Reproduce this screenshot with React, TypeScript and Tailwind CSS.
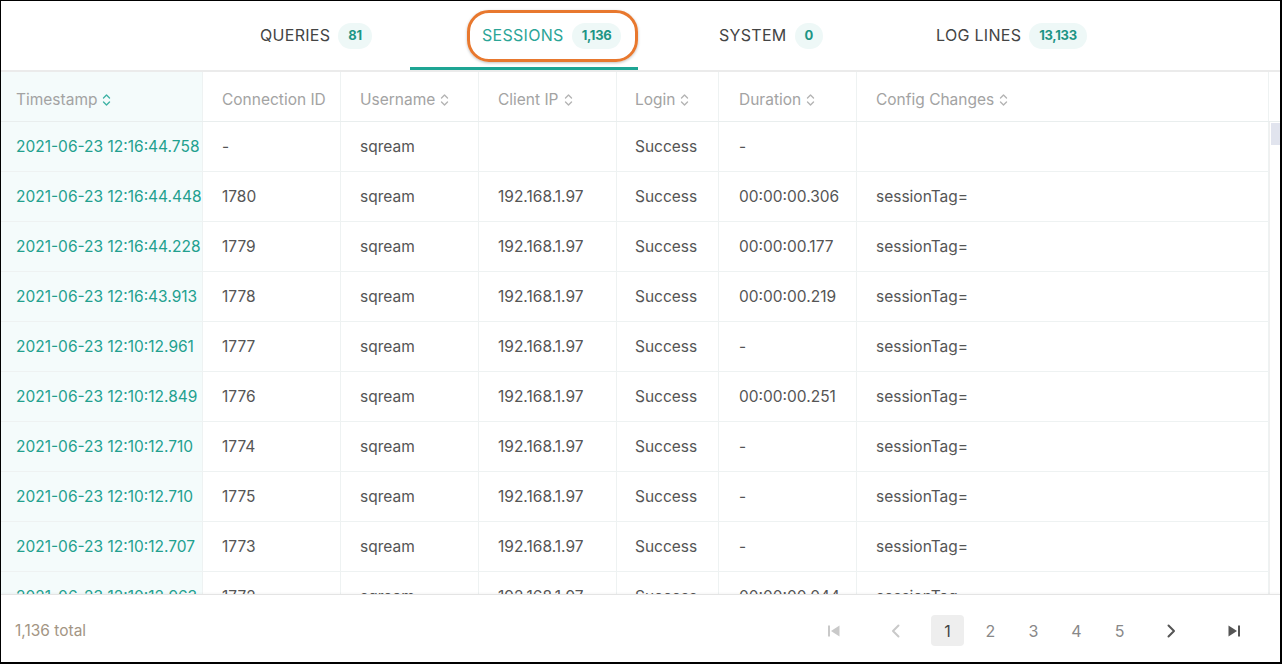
import React from "react";

type Row = {
  ts: string;
  conn: string;
  user: string;
  ip: string;
  login: string;
  duration: string;
  config: string;
};

const rows: Row[] = [
  { ts: "2021-06-23 12:16:44.758", conn: "-", user: "sqream", ip: "", login: "Success", duration: "-", config: "" },
  { ts: "2021-06-23 12:16:44.448", conn: "1780", user: "sqream", ip: "192.168.1.97", login: "Success", duration: "00:00:00.306", config: "sessionTag=" },
  { ts: "2021-06-23 12:16:44.228", conn: "1779", user: "sqream", ip: "192.168.1.97", login: "Success", duration: "00:00:00.177", config: "sessionTag=" },
  { ts: "2021-06-23 12:16:43.913", conn: "1778", user: "sqream", ip: "192.168.1.97", login: "Success", duration: "00:00:00.219", config: "sessionTag=" },
  { ts: "2021-06-23 12:10:12.961", conn: "1777", user: "sqream", ip: "192.168.1.97", login: "Success", duration: "-", config: "sessionTag=" },
  { ts: "2021-06-23 12:10:12.849", conn: "1776", user: "sqream", ip: "192.168.1.97", login: "Success", duration: "00:00:00.251", config: "sessionTag=" },
  { ts: "2021-06-23 12:10:12.710", conn: "1774", user: "sqream", ip: "192.168.1.97", login: "Success", duration: "-", config: "sessionTag=" },
  { ts: "2021-06-23 12:10:12.710", conn: "1775", user: "sqream", ip: "192.168.1.97", login: "Success", duration: "-", config: "sessionTag=" },
  { ts: "2021-06-23 12:10:12.707", conn: "1773", user: "sqream", ip: "192.168.1.97", login: "Success", duration: "-", config: "sessionTag=" },
  { ts: "2021-06-23 12:10:12.963", conn: "1772", user: "sqream", ip: "192.168.1.97", login: "Success", duration: "00:00:00.044", config: "sessionTag=" },
];

function SortIcon({ active }: { active?: boolean }) {
  return (
    <svg width="9" height="14" viewBox="0 0 9 14" className="ml-[5px] shrink-0">
      <path
        d="M1.5 5 L4.5 2 L7.5 5 M1.5 9 L4.5 12 L7.5 9"
        fill="none"
        stroke={active ? "#3fb3a5" : "#b4b4b4"}
        strokeWidth="1.4"
        strokeLinecap="round"
        strokeLinejoin="round"
      />
    </svg>
  );
}

function Tab({
  label,
  count,
  active,
  pad,
}: {
  label: string;
  count: string;
  active?: boolean;
  pad: string;
}) {
  return (
    <div className={`relative flex h-full w-[228px] items-center pb-[2px] ${pad}`}>
      {active && (
        <div className="absolute left-[57px] top-[9px] h-[52px] w-[171px] rounded-[22px] border-[3px] border-[#e8782e] shadow-[0_1px_3px_rgba(0,0,0,0.25)]" />
      )}
      <span
        className={`text-[16px] tracking-[0.3px] ${active ? "text-[#2ba597]" : "text-[#444]"}`}
      >
        {label}
      </span>
      <span className="ml-[8px] mt-[2px] flex h-[26px] items-center rounded-full bg-[#eef8f7] px-[10px] text-[13px] font-bold tracking-[-0.3px] text-[#1d9585]">
        {count}
      </span>
      {active && <div className="absolute bottom-0 left-0 h-[3px] w-full bg-[#1ea594]" />}
    </div>
  );
}

function EdgeIcon({ dir, color }: { dir: "first" | "last"; color: string }) {
  return (
    <svg width="16" height="16" viewBox="0 0 16 16">
      {dir === "first" ? (
        <>
          <rect x="2" y="2.5" width="2" height="11" fill={color} />
          <path d="M13.5 2.5 L5 8 L13.5 13.5 Z" fill={color} />
        </>
      ) : (
        <>
          <path d="M2.5 2.5 L11 8 L2.5 13.5 Z" fill={color} />
          <rect x="12" y="2.5" width="2" height="11" fill={color} />
        </>
      )}
    </svg>
  );
}

function Chevron({ dir, color }: { dir: "left" | "right"; color: string }) {
  return (
    <svg width="14" height="16" viewBox="0 0 14 16">
      <path
        d={dir === "left" ? "M9.5 2.5 L4 8 L9.5 13.5" : "M4.5 2.5 L10 8 L4.5 13.5"}
        fill="none"
        stroke={color}
        strokeWidth="2"
        strokeLinecap="round"
        strokeLinejoin="round"
      />
    </svg>
  );
}

const cellBase = "flex h-full shrink-0 items-center border-r border-[#eef2f2] overflow-hidden whitespace-nowrap";

export default function App() {
  return (
    <div className="box-border flex h-[664px] w-[1282px] flex-col overflow-hidden border-l border-t border-r-2 border-b-2 border-black bg-white font-['Inter','Noto_Sans',sans-serif]">
      {/* tabs */}
      <div className="flex h-[71px] shrink-0 border-b-2 border-[#ebebeb] pl-[181px]">
        <Tab label="QUERIES" count="81" pad="pl-[78px]" />
        <Tab label="SESSIONS" count="1,136" active pad="pl-[72px]" />
        <Tab label="SYSTEM" count="0" pad="pl-[81px]" />
        <Tab label="LOG LINES" count="13,133" pad="pl-[70px]" />
      </div>

      {/* table */}
      <div className="flex min-h-0 flex-1 flex-col overflow-hidden">
        <div className="flex h-[50px] shrink-0 border-b border-[#e9eeee] text-[15.5px] text-[#a3a3a3]">
          <div className={`${cellBase} w-[202px] bg-[#f4fbfb] pl-[15px] pt-[7px]`}>
            Timestamp
            <SortIcon active />
          </div>
          <div className={`${cellBase} w-[138px] pl-[19px] pt-[7px]`}>Connection ID</div>
          <div className={`${cellBase} w-[138px] pl-[19px] pt-[7px]`}>
            Username
            <SortIcon />
          </div>
          <div className={`${cellBase} w-[138px] pl-[19px] pt-[7px]`}>
            Client IP
            <SortIcon />
          </div>
          <div className={`${cellBase} w-[102px] pl-[18px] pt-[7px]`}>
            Login
            <SortIcon />
          </div>
          <div className={`${cellBase} w-[138px] pl-[20px] pt-[7px]`}>
            Duration
            <SortIcon />
          </div>
          <div className={`${cellBase} flex-1 pl-[19px] pt-[7px]`}>
            Config Changes
            <SortIcon />
          </div>
          <div className="w-[11px] shrink-0" />
        </div>

        <div className="flex min-h-0 flex-1">
          <div className="flex-1 overflow-hidden">
            {rows.map((r, i) => (
              <div
                key={i}
                className="flex h-[50px] border-b border-[#eef2f2] text-[15.5px] text-[#555]"
              >
                <div className={`${cellBase} w-[202px] bg-[#f4fbfb] pl-[15px] text-[#22a08f]`}>{r.ts}</div>
                <div className={`${cellBase} w-[138px] pl-[19px]`}>{r.conn}</div>
                <div className={`${cellBase} w-[138px] pl-[19px]`}>{r.user}</div>
                <div className={`${cellBase} w-[138px] pl-[19px]`}>{r.ip}</div>
                <div className={`${cellBase} w-[102px] pl-[18px]`}>{r.login}</div>
                <div className={`${cellBase} w-[138px] pl-[20px]`}>{r.duration}</div>
                <div className={`${cellBase} flex-1 pl-[19px]`}>{r.config}</div>
              </div>
            ))}
          </div>
          <div className="w-[11px] shrink-0 border-l border-[#f0f0f0] pt-[1px]">
            <div className="ml-[1px] h-[22px] w-[10px] bg-[#e1e4ee]" />
          </div>
        </div>
      </div>

      {/* footer */}
      <div className="flex h-[68px] shrink-0 items-center border-t border-[#e4e4e4] pl-[14px] pr-[30px] pt-[4px] shadow-[0_-1px_2px_rgba(0,0,0,0.04)]">
        <span className="text-[15.5px] text-[#a39584]">1,136 total</span>
        <div className="ml-auto flex items-center text-[16px]">
          <button className="flex h-[31px] w-[33px] items-center justify-center">
            <EdgeIcon dir="first" color="#c9c9c9" />
          </button>
          <button className="ml-[29px] flex h-[31px] w-[33px] items-center justify-center">
            <Chevron dir="left" color="#c9c9c9" />
          </button>
          <div className="ml-[19px] flex items-center gap-[10px]">
            <span className="flex h-[31px] w-[33px] items-center justify-center rounded-[4px] bg-[#eeeeee] text-[#444]">1</span>
            <span className="flex h-[31px] w-[33px] items-center justify-center text-[#888]">2</span>
            <span className="flex h-[31px] w-[33px] items-center justify-center text-[#888]">3</span>
            <span className="flex h-[31px] w-[33px] items-center justify-center text-[#888]">4</span>
            <span className="flex h-[31px] w-[33px] items-center justify-center text-[#888]">5</span>
          </div>
          <button className="ml-[18px] flex h-[31px] w-[33px] items-center justify-center">
            <Chevron dir="right" color="#555" />
          </button>
          <button className="ml-[30px] flex h-[31px] w-[33px] items-center justify-center">
            <EdgeIcon dir="last" color="#555" />
          </button>
        </div>
      </div>
    </div>
  );
}
